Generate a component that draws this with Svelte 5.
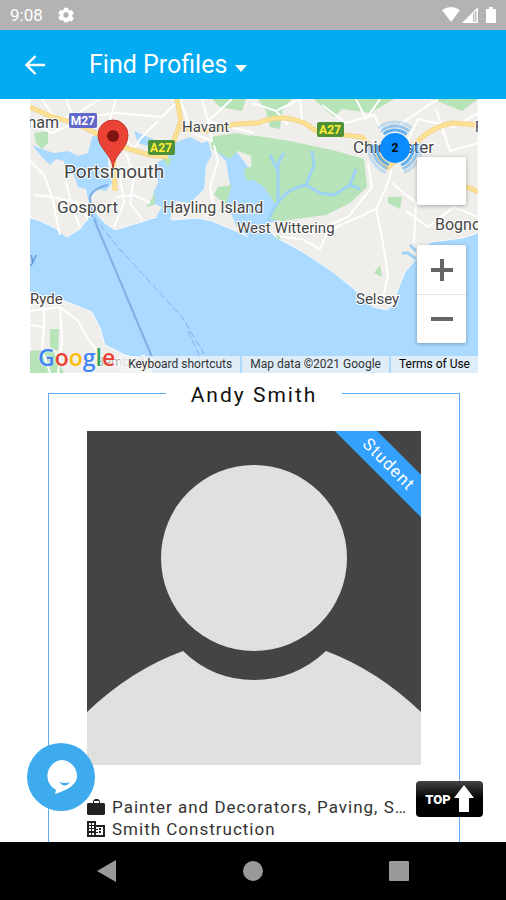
<script>

const roads = [
    'M0 24 L22 34 L40 26 L62 30',
    'M12 0 L26 22 L48 14 L70 0',
    'M36 0 L44 20 L86 14 L132 18 L150 0',
    'M86 0 L80 20 L104 50 L110 40 L128 22',
    'M0 62 L14 76 L22 98 L30 136',
    'M4 96 L22 98 L48 104 L58 120',
    'M36 82 L42 108 L50 128',
    'M82 50 L90 78 L94 104 L84 128',
    'M96 54 L104 78 L100 104 L112 120',
    'M86 72 L104 76 L120 70',
    'M86 98 L104 96 L120 104',
    'M150 0 L162 34 L182 42 L178 22 L224 34',
    'M172 0 L178 22 L202 0',
    'M222 4 L246 12 L270 0',
    'M246 12 L258 26',
    'M270 0 L272 22',
    'M292 6 L316 24 L344 16 L356 40',
    'M326 0 L336 20 L350 0',
    'M354 46 L372 24 L408 0',
    'M376 46 L388 20 L424 28 L448 14',
    'M406 10 L420 52 L448 44',
    'M362 70 L358 84 L346 110 L352 138 L358 176 L352 204',
    'M338 64 L342 88 L318 118 L290 130',
    'M376 112 L398 128 L424 108 L448 118',
    'M362 84 L386 104 L384 144',
    'M250 138 L272 140 L290 150 L298 132 L346 110',
    'M184 46 L188 62 L180 88 L184 108 L176 118',
    'M0 212 L30 208 L48 222 L58 240 L70 256',
    'M0 226 L14 228 L12 250 L20 274',
    'M14 208 L14 228',
    'M30 208 L32 240 L28 274'
]

const highways = [
    'M0 8 L22 18 L46 24 L92 48 L120 56 L138 58',
    'M147 0 L151 22 L143 44 L122 56',
    'M151 29 L176 32 L206 25 L228 24 Q250 14 274 24 L288 33 L332 38 L358 68 L386 44 Q404 26 424 24 L448 26',
    'M434 88 L440 89 L448 93',
    'M82 50 L84 64 L85 92'
]

const parks = [
    'M4 34 L18 32 L18 44 L12 50 L6 44 Z',
    'M182 0 L216 0 L212 12 L190 8 Z',
    'M228 0 L262 0 L252 12 L250 30 L240 28 L236 12 Z',
    'M284 0 L364 0 L340 14 L312 10 L304 18 L292 8 Z',
    'M402 0 L448 0 L432 12 Z',
    'M180 38 L206 34 L226 38 L224 58 L208 52 L200 60 L182 50 Z',
    'M188 88 L202 86 L196 106 L184 96 Z',
    'M214 70 L224 66 L224 84 L216 80 Z',
    'M220 36 L260 42 L306 52 L334 60 L337 88 L320 104 L296 116 L252 122 L224 118 Z',
    'M130 56 L142 60 L138 68 Z',
    'M116 108 L126 94 L124 106 Z',
    'M358 98 L372 98 L370 110 L358 104 Z',
    'M350 166 L352 178 L344 174 Z',
    'M0 252 L22 250 L34 274 L0 274 Z',
    'M20 230 L29 230 L28 252 L20 248 Z',
    'M247 136 L254 140 L246 140 Z'
]

const labels = [
    { text: 'Fareham', x: 29, y: 29, size: 16, end: true },
    { text: 'Havant', x: 152, y: 33, size: 15 },
    { text: 'Portsmouth', x: 34, y: 79, size: 19 },
    { text: 'Gosport', x: 27, y: 114, size: 17 },
    { text: 'Hayling Island', x: 133, y: 114, size: 16 },
    { text: 'West Wittering', x: 207, y: 134, size: 15 },
    { text: 'Chichester', x: 323, y: 54, size: 17 },
    { text: 'Bognor Regis', x: 405, y: 131, size: 16 },
    { text: 'F', x: 445, y: 33, size: 14 },
    { text: 'Selsey', x: 326, y: 205, size: 15 },
    { text: 'Ryde', x: 0, y: 205, size: 15 }
]

let title = 'Andy Smith'

</script>

<div class="screen">
    <header>
        <div class="status">
            <span>9:08</span>
            <svg width="16" height="16" viewBox="0 0 24 24"><path fill="#fff" fill-rule="evenodd" d="M9 1h6l.7 3.2 2 1.2 3.1-1 3 5.200-2.400 2.200v2.400l2.400 2.200-3 5.200-3.100-1-2 1.200L15 23H9l-.7-2.400-2-1.200-3.100 1-3-5.200 2.400-2.200v-2.400L.2 9.600l3-5.200 3.100 1 2-1.200zM12 8a4 4 0 1 0 0 8 4 4 0 0 0 0-8z"/></svg>
            <svg class="signals" width="56" height="18" viewBox="0 0 56 18">
                <path fill="#fff" d="M0 4Q9-2 18 4L9 16z"/>
                <path fill="#fff" fill-rule="evenodd" d="M20 17L36 1v16zM31 8v7.500h3.500V4.500z"/>
                <path fill="#fff" d="M32.300 7h1v8h-1z"/>
                <path fill="#fff" d="M44 3h3V1h4v2h3v14H44z"/>
            </svg>
        </div>
        <div class="toolbar">
            <button class="back" aria-label="Back">
                <svg width="20" height="20" viewBox="0 0 20 20"><path fill="none" stroke="#fff" stroke-width="2.400" d="M20 10H2M10.500 1L1.500 10l9 9"/></svg>
            </button>
            <button class="title">Find Profiles
                <svg width="12" height="7" viewBox="0 0 12 7"><path fill="#fff" d="M0 0h12L6 7z"/></svg>
            </button>
        </div>
    </header>

    <main>
        <div class="map">
            <svg class="tiles" viewBox="0 0 448 274" preserveAspectRatio="xMidYMid slice">
                <rect width="448" height="274" fill="#aadaff"/>
                <path class="land" d="M0 0H448V134L433 139 400 143 387 159 375 173 367 193 364 205 357 211 343 208 323 189 303 173 273 153 247 139 233 126 222 130 220 139 208 133 182 122 168 119 142 121 134 112 127 118 108 124 85 131 75 124 66 114 55 123 50 130 37 138 25 129 8 121 0 119z"/>
                <path class="land" d="M0 196L32 201 62 213 70 229 75 246 95 256 118 262 122 274H0z"/>
                <!-- harbours -->
                <path class="water" d="M2 46L12 50 24 54 38 52 48 57 58 54 62 38 70 34 76 44 78 54 78 70 82 84 76 92 68 90 60 98 62 108 67 116 58 121 59 104 56 90 48 88 44 76 36 74 34 62 26 60 20 66 12 58z"/>
                <path class="water" d="M104 32L118 38 132 44 128 50 108 44z"/>
                <path class="water" d="M126 64L138 58 144 44 160 38 172 44 178 42 182 56 176 66 174 90 160 104 146 102 140 120 126 118 132 108 122 104 124 92 128 84z"/>
                <path class="water" d="M180 46L206 52 224 76 224 92 238 96 252 112 246 122 228 128 220 140 206 126 196 104 200 86 196 62z"/>
                {#each parks as d}
                    <path class="park" {d}/>
                {/each}
                <path class="water" d="M222 80L234 88 246 106 242 116 236 126 222 130 206 120 202 104 212 90z"/>
                <path class="creek" d="M238 122Q250 90 276 86L290 94 304 96 320 86 326 70M276 86L284 66 282 52M248 102L248 64 254 54M248 72L240 56M320 86L330 90M386 160L378 154 372 154M386 152L380 146"/>
                <g class="roads">
                    {#each roads as d}
                        <path {d}/>
                    {/each}
                </g>
                <g class="edge">
                    {#each highways as d}
                        <path {d}/>
                    {/each}
                </g>
                <g class="highways">
                    {#each highways as d}
                        <path {d}/>
                    {/each}
                </g>
                <g class="ferry">
                    <path d="M62 118L60 98Q62 90 78 86M64 120L122 258"/>
                    <path stroke-width="1" stroke-dasharray="7 3" d="M64 118L86 146 152 218 176 258M158 232L170 258"/>
                </g>
                {#each labels as l}
                    <text x={l.x} y={l.y} font-size={l.size} text-anchor={l.end ? 'end' : 'start'}>{l.text}</text>
                {/each}
                <text class="faint" x="66" y="267">Bembridge</text>
                <text class="sea" x="0" y="164">y</text>
                <g class="shield">
                    <rect x="39" y="14" width="28" height="15" rx="2" fill="#6267cb"/>
                    <text x="53" y="26">M27</text>
                    <rect x="118" y="41" width="27" height="15" rx="2" fill="#4d9138"/>
                    <text class="a" x="131" y="53">A27</text>
                    <rect x="287" y="23" width="27" height="15" rx="2" fill="#4d9138"/>
                    <text class="a" x="300" y="35">A27</text>
                </g>
                <!-- pin -->
                <path fill="#ea4335" stroke="#c5362b" d="M83 69C82 55 68 50 68 36a15 15 0 0 1 30 0C98 50 84 55 83 69z"/>
                <circle cx="83" cy="37" r="6" fill="#811411"/>
                <!-- cluster -->
                <g class="rings" transform="rotate(-130 365 49)">
                    <circle cx="365" cy="49" r="18" pathLength="360" opacity=".8"/>
                    <circle cx="365" cy="49" r="22" pathLength="360" opacity=".5"/>
                    <circle cx="365" cy="49" r="26" pathLength="360" opacity=".25"/>
                </g>
                <circle cx="365" cy="49" r="15" fill="#0a8cff"/>
                <text class="count" x="365" y="53">2</text>
            </svg>
            <div class="controls">
                <button class="blank" aria-label="Toggle fullscreen"></button>
                <div class="zoom">
                    <button aria-label="Zoom in"><svg width="22" height="22" viewBox="0 0 22 22"><path stroke="#666" stroke-width="4" d="M0 11h22M11 0v22"/></svg></button>
                    <button aria-label="Zoom out"><svg width="22" height="22" viewBox="0 0 22 22"><path stroke="#666" stroke-width="4" d="M0 11h22"/></svg></button>
                </div>
            </div>
            <div class="google"><span class="b">G</span><span class="r">o</span><span class="y">o</span><span class="b">g</span><span class="g">l</span><span class="r">e</span></div>
            <div class="legal">
                <button>Keyboard shortcuts</button>
                <span>Map data ©2021 Google</span>
                <a href="#terms">Terms of Use</a>
            </div>
        </div>

        <fieldset>
            <legend>{title}</legend>
            <div class="photo">
                <svg viewBox="0 0 334 334">
                    <rect width="334" height="334" fill="#444"/>
                    <circle cx="167" cy="127" r="93" fill="#e0e0e0"/>
                    <path fill="#e0e0e0" d="M0 281Q44 239 96 220Q126 249 167 249T239 220Q290 239 334 281V334H0z"/>
                </svg>
                <div class="ribbon">Student</div>
            </div>
            <div class="row">
                <svg width="18" height="18" viewBox="0 0 18 18"><path fill="#222" fill-rule="evenodd" d="M1 5h5V3l2-2h3l2 2v2h4l1 1v10l-1 1H1l-1-1V6zM7 5h5V3H7z"/></svg>
                <span>Painter and Decorators, Paving, Scaffolding</span>
            </div>
            <div class="row">
                <svg width="18" height="18" viewBox="0 0 18 18"><path fill="#222" fill-rule="evenodd" d="M0 1h9v4h9v12H0zM2 3v2h2V3zM5 3v2h2V3zM2 6v2h2V6zM5 6v2h2V6zM2 9v2h2V9zM5 9v2h2V9zM2 13v2h2v-2zM5 13v2h2v-2zM9 7v2h2v1H9v2h2v1H9v2h7V7zM12 8h2v2h-2zM12 11h2v2h-2z"/></svg>
                <span>Smith Construction</span>
            </div>
        </fieldset>

        <button class="chat" aria-label="Chat">
            <svg width="34" height="36" viewBox="0 0 34 36"><path fill="#fff" d="M17 1a16 16 0 0 1 16 16c0 9-10 14-22 18l1-4A16 16 0 0 1 17 1z"/><path fill="#3dabee" d="M15 23q6 2 11 0-5 7-11 0z"/></svg>
        </button>
        <button class="top">TOP
            <svg width="20" height="28" viewBox="0 0 20 28"><path fill="#fff" d="M10 0l10 13h-5v14H5V13H0z"/></svg>
        </button>
    </main>

    <nav>
        <button aria-label="Back"><svg width="20" height="22" viewBox="0 0 20 22"><path fill="#999" d="M19 0v22L0 11z"/></svg></button>
        <button aria-label="Home"><svg width="20" height="20" viewBox="0 0 20 20"><circle cx="10" cy="10" r="10" fill="#999"/></svg></button>
        <button aria-label="Recent apps"><svg width="20" height="20" viewBox="0 0 20 20"><rect width="20" height="20" rx="1" fill="#999"/></svg></button>
    </nav>
</div>

<style>

:global(body) {
    margin: 0;
}

.screen {
    display: flex;
    flex-direction: column;
    height: 100vh;
    background: #fff;
    font-family: Roboto, "Liberation Sans", sans-serif;
}

button {
    margin: 0;
    padding: 0;
    border: 0;
    background: none;
    font: inherit;
    color: inherit;
}

svg {
    display: block;
}

.status {
    display: flex;
    align-items: center;
    height: 30px;
    padding: 0 8px 0 10px;
    gap: 15px;
    background: #b3b3b3;
    color: #fff;
    font-size: 17px;
}

.signals {
    margin-left: auto;
}

.toolbar {
    display: flex;
    align-items: center;
    height: 69px;
    padding: 0 25px;
    gap: 44px;
    background: #03abf3;
    color: #fff;
}

.title {
    display: flex;
    align-items: center;
    gap: 8px;
    font-size: 25px;
}

.title svg {
    margin-top: 8px;
}

main {
    flex: 1;
    min-height: 0;
    position: relative;
    overflow: hidden;
}

.map {
    position: relative;
    height: 274px;
    margin: 0 28px 0 30px;
    overflow: hidden;
}

.tiles {
    width: 100%;
    height: 100%;
}

.land {
    fill: #efeeea;
    stroke: #fafafa;
}

.water {
    fill: #aadaff;
}

.park {
    fill: #b6e3b8;
}

.creek {
    fill: none;
    stroke: #9fd3f5;
    stroke-width: 3;
}

.roads {
    fill: none;
    stroke: #fff;
    stroke-width: 2;
}

.edge {
    fill: none;
    stroke: #f5d58a;
    stroke-width: 5;
}

.highways {
    fill: none;
    stroke: #fde293;
    stroke-width: 3;
}

.ferry {
    fill: none;
    stroke: #80aee6;
    stroke-width: 2;
}

.tiles text {
    fill: #444;
    stroke: #fff;
    stroke-width: 2px;
    paint-order: stroke;
}

.tiles .faint {
    fill: #aaa;
    font-size: 13px;
}

.tiles .sea {
    fill: #5b8fd0;
    stroke: none;
    font-size: 14px;
    font-style: italic;
}

.tiles .shield text {
    fill: #fff;
    stroke: none;
    font-size: 12px;
    font-weight: bold;
    text-anchor: middle;
}

.tiles .shield .a {
    fill: #ffee35;
}

.rings {
    fill: none;
    stroke: #3c9cf0;
    stroke-width: 3;
    stroke-dasharray: 80 40;
}

.tiles .count {
    fill: #000;
    stroke: none;
    font-size: 12px;
    font-weight: bold;
    text-anchor: middle;
}

.controls {
    position: absolute;
    right: 12px;
    top: 58px;
    display: flex;
    flex-direction: column;
    gap: 40px;
}

.blank, .zoom {
    width: 49px;
    background: #fff;
    border-radius: 2px;
    box-shadow: 0 1px 4px rgba(0, 0, 0, .3);
}

.blank {
    height: 48px;
}

.zoom button {
    display: flex;
    width: 100%;
    height: 49px;
    align-items: center;
    justify-content: center;
}

.zoom button + button {
    border-top: 1px solid #e6e6e6;
}

.google {
    position: absolute;
    left: 8px;
    bottom: 2px;
    font-family: "Open Sans", sans-serif;
    font-size: 23px;
    line-height: 28px;
    font-weight: 600;
    text-shadow: 0 0 2px #fff;
}

.b { color: #4285f4; }
.r { color: #ea4335; }
.y { color: #fbbc05; }
.g { color: #34a853; }

.legal {
    position: absolute;
    right: 0;
    bottom: 0;
    display: flex;
    gap: 2px;
    font-size: 12px;
    line-height: 17px;
    white-space: nowrap;
    color: #333;
}

.legal > * {
    padding: 0 8px;
    background: rgba(245, 245, 245, .7);
}

.legal a {
    color: #000;
    text-decoration: none;
}

fieldset {
    min-width: 0;
    margin: 7px 46px 0 48px;
    padding: 24px 38px 60px 38px;
    border: 1px solid #62adf7;
}

legend {
    margin: 0 auto;
    padding: 4px 25px 0 25px;
    font-size: 21px;
    line-height: 23px;
    letter-spacing: 2px;
    color: #111;
}

.photo {
    position: relative;
    overflow: hidden;
    margin-bottom: 31px;
}

.ribbon {
    position: absolute;
    top: 18px;
    right: -48px;
    width: 160px;
    transform: rotate(45deg);
    background: #33a1fd;
    color: #fff;
    font-size: 17px;
    line-height: 30px;
    letter-spacing: 1px;
    text-align: center;
}

.row {
    display: flex;
    align-items: center;
    gap: 7px;
    padding-right: 8px;
    font-size: 17px;
    line-height: 22px;
    letter-spacing: 1px;
    color: #333;
}

.row svg {
    flex: none;
}

.row span {
    overflow: hidden;
    white-space: nowrap;
    text-overflow: ellipsis;
}

.chat {
    position: absolute;
    left: 27px;
    bottom: 31px;
    display: flex;
    align-items: center;
    justify-content: center;
    width: 68px;
    height: 68px;
    border-radius: 50%;
    background: #3dabee;
}

.top {
    position: absolute;
    right: 23px;
    bottom: 25px;
    display: flex;
    align-items: center;
    justify-content: center;
    gap: 3px;
    width: 67px;
    height: 36px;
    border-radius: 4px;
    background: linear-gradient(#444, #000 50%);
    color: #fff;
    font-size: 13px;
    font-weight: 900;
}

nav {
    display: flex;
    align-items: center;
    justify-content: space-around;
    height: 58px;
    padding: 0 34px;
    background: #000;
}

</style>
